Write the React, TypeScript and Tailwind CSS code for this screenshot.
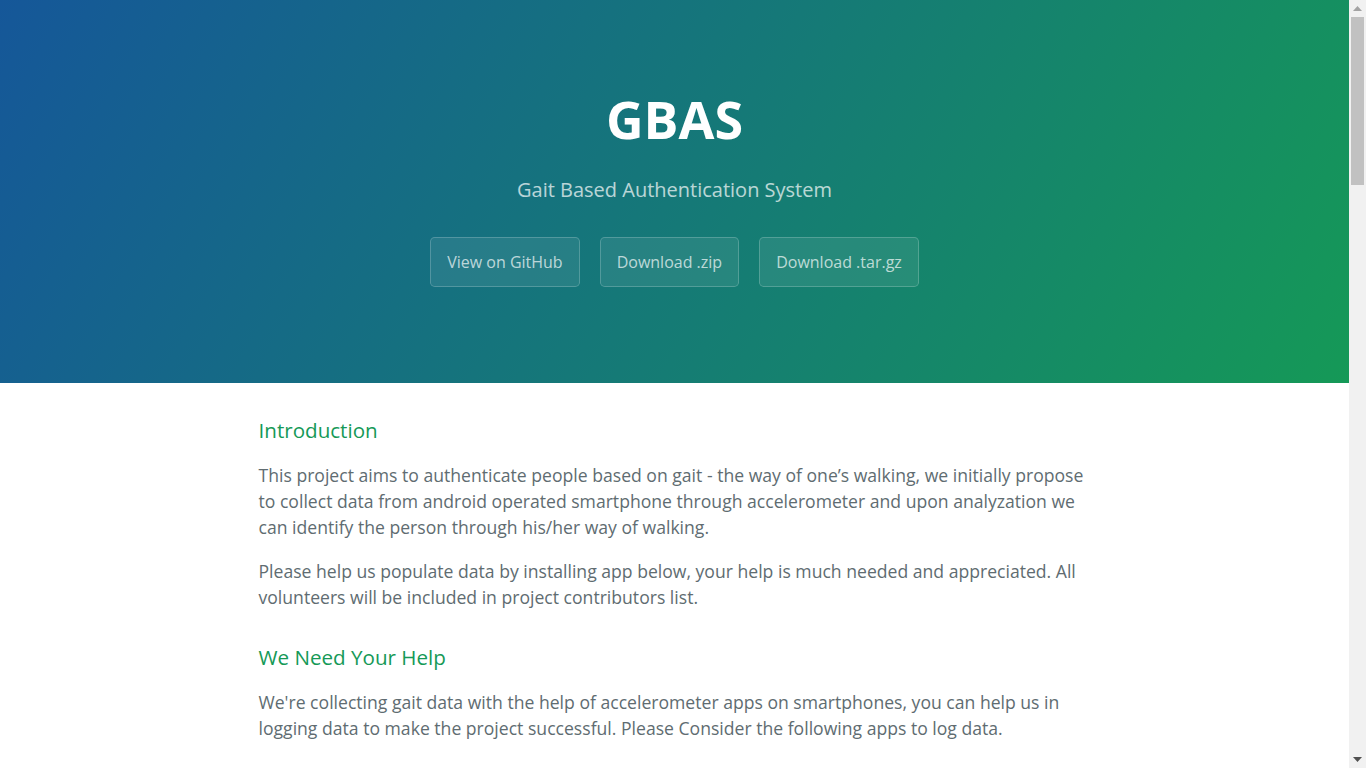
import React from "react";

const H3 = ({ children, first }: { children: React.ReactNode; first?: boolean }) => (
  <h3
    className={`${first ? "mt-0" : "mt-8"} mb-4 text-[20.6px] leading-[31px] font-normal text-[#159957]`}
  >
    {children}
  </h3>
);

const P = ({ children }: { children: React.ReactNode }) => (
  <p className="mt-0 mb-[18.6px]">{children}</p>
);

function Scrollbar() {
  return (
    <div className="w-[17px] h-screen shrink-0 bg-[#f1f1f1] flex flex-col items-center">
      <div className="h-[17px] w-full flex items-center justify-center">
        <svg width="9" height="5" viewBox="0 0 9 5">
          <polygon points="4.5,0 9,5 0,5" fill="#a3a3a3" />
        </svg>
      </div>
      <div className="w-[13px] h-[168px] bg-[#c1c1c1]" />
      <div className="flex-1" />
      <div className="h-[17px] w-full flex items-center justify-center">
        <svg width="9" height="5" viewBox="0 0 9 5">
          <polygon points="0,0 9,0 4.5,5" fill="#505050" />
        </svg>
      </div>
    </div>
  );
}

export default function App() {
  return (
    <div
      className="h-screen flex overflow-hidden bg-white text-[#606c71] text-[16px] leading-[1.5]"
      style={{ fontFamily: '"Open Sans", "Helvetica Neue", Helvetica, Arial, sans-serif' }}
    >
      <div className="flex-1 min-w-0 h-screen overflow-hidden">
        <section className="bg-[linear-gradient(120deg,#155799,#159957)] text-white text-center px-24 pt-20 pb-20">
          <h1 className="m-0 mb-[1.6px] text-[52px] leading-[78px] font-bold">GBAS</h1>
          <h2 className="mt-[16.6px] mb-8 text-[20px] leading-[30px] font-normal opacity-70">
            Gait Based Authentication System
          </h2>
          <div className="flex justify-center gap-[20px] mb-4">
            {["View on GitHub", "Download .zip", "Download .tar.gz"].map((t) => (
              <a
                key={t}
                href="#"
                className="block px-4 py-3 text-[16px] leading-6 text-white/70 bg-white/[0.08] border border-solid border-white/20 rounded-[4.8px]"
              >
                {t}
              </a>
            ))}
          </div>
        </section>

        <section className="max-w-[1024px] mx-auto px-24 pt-8 text-[17.6px] leading-[26px]">
          <H3 first>Introduction</H3>
          <P>
            This project aims to authenticate people based on gait - the way of one’s walking, we initially propose
            to collect data from android operated smartphone through accelerometer and upon analyzation we
            can identify the person through his/her way of walking.
          </P>
          <P>
            Please help us populate data by installing app below, your help is much needed and appreciated. All
            volunteers will be included in project contributors list.
          </P>

          <H3>We Need Your Help</H3>
          <P>
            We're collecting gait data with the help of accelerometer apps on smartphones, you can help us in
            logging data to make the project successful. Please Consider the following apps to log data.
          </P>
        </section>
      </div>
      <Scrollbar />
    </div>
  );
}
